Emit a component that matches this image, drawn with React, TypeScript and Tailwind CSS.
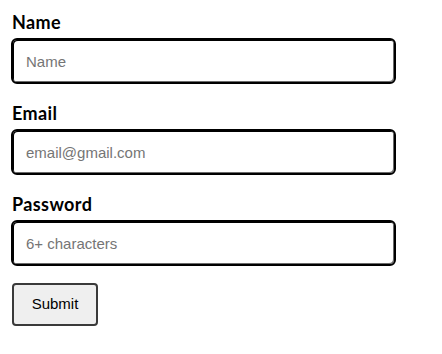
import React from "react";

function Field({ label, placeholder, type }: { label: string; placeholder: string; type: string }) {
  return (
    <div className="flex flex-col">
      <label className="text-[18px] leading-[24px] tracking-[0.4px] font-bold text-black font-['Lato','Noto_Sans',sans-serif] pl-[1px]">{label}</label>
      <input
        type={type}
        placeholder={placeholder}
        className="mt-[4px] w-[385px] h-[46px] rounded-[6px] border-[2px] border-black bg-white pl-[13px] text-[15px] font-['Liberation_Sans',Arial,sans-serif] text-black placeholder:text-[#757575] outline-none shadow-[inset_1px_1px_0_#000,inset_-1px_-1px_0_#6b6b6b]"
      />
    </div>
  );
}

export default function App() {
  return (
    <div className="bg-white w-[442px] h-[354px] pl-[11px] pt-[10px]">
      <div className="flex flex-col gap-[17px]">
        <Field label="Name" placeholder="Name" type="text" />
        <Field label="Email" placeholder="email@gmail.com" type="email" />
        <Field label="Password" placeholder="6+ characters" type="password" />
      </div>
      <button className="block mt-[17px] ml-[1px] w-[86px] h-[43px] rounded-[4px] border-[2px] border-[#3a3a3a] bg-[#efefef] text-[15px] text-black font-['Liberation_Sans',Arial,sans-serif]">
        Submit
      </button>
    </div>
  );
}
